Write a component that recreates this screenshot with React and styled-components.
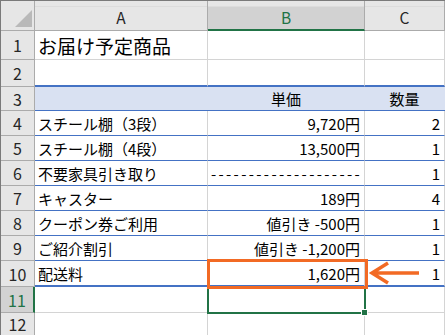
import React from "react";
import styled, { createGlobalStyle, css } from "styled-components";

const Global = createGlobalStyle`
  html, body { margin: 0; padding: 0; background: #fff; overflow: hidden; }
  body { font-family: "Noto Sans CJK JP", "Noto Sans", sans-serif; }
`;

const ORANGE = "#f26a24";
const GREEN = "#217346";
const BLUE = "#4472c4";
const GRID = "#d4d4d4";
const HEAD_BG = "#e6e6e6";
const HEAD_SEL = "#d2d2d2";
const HEAD_LINE = "#ababab";

const Frame = styled.div`
  position: relative;
  width: 444px;
  height: 334px;
  border-top: 1px solid #7a7a7a;
  border-left: 1px solid #7a7a7a;
  overflow: hidden;
  background: #fff;
`;

const Sheet = styled.div`
  display: grid;
  height: 100%;
  grid-template-columns: 34px 173px 157px 1fr;
  grid-template-rows: 30px 29px 27px 24px repeat(6, 25px) 26px 26px 1fr;
  font-family: "Noto Sans CJK JP", "Noto Sans", sans-serif;
  color: #000;
`;

const Corner = styled.div`
  box-sizing: border-box;
  background: ${HEAD_BG};
  border-right: 1px solid ${HEAD_LINE};
  border-bottom: 1px solid ${HEAD_LINE};
  display: flex;
  align-items: flex-end;
  justify-content: flex-end;
  padding: 0 2px 3px 0;
`;

const ColHead = styled.div`
  box-sizing: border-box;
  display: flex;
  align-items: center;
  justify-content: center;
  padding-top: 5px;
  font-size: 15.5px;
  line-height: 1;
  color: ${(p) => (p.$sel ? GREEN : "#262626")};
  background: linear-gradient(
    to bottom,
    ${HEAD_BG} 0 5px,
    #dcdcdc 5px 6px,
    ${(p) => (p.$sel ? HEAD_SEL : HEAD_BG)} 6px
  );
  border-right: 1px solid ${HEAD_LINE};
  border-bottom: ${(p) => (p.$sel ? `2px solid ${GREEN}` : `1px solid ${HEAD_LINE}`)};
`;

const RowHead = styled.div`
  box-sizing: border-box;
  display: flex;
  align-items: center;
  justify-content: center;
  font-size: 16px;
  line-height: 1;
  color: ${(p) => (p.$sel ? GREEN : "#262626")};
  background: ${(p) => (p.$sel ? HEAD_SEL : HEAD_BG)};
  border-right: ${(p) => (p.$sel ? `2px solid ${GREEN}` : `1px solid ${HEAD_LINE}`)};
  border-bottom: ${(p) => (p.$last ? "none" : `1px solid ${HEAD_LINE}`)};
`;

const lineStyles = {
  grid: `1px solid ${GRID}`,
  blue: `1px solid ${BLUE}`,
  blueThick: `2px solid ${BLUE}`,
  none: "none",
};

const Cell = styled.div`
  box-sizing: border-box;
  display: flex;
  align-items: center;
  min-width: 0;
  white-space: nowrap;
  font-size: 15px;
  line-height: 1;
  padding: 0 4px 0 3px;
  justify-content: ${(p) =>
    p.$align === "right" ? "flex-end" : p.$align === "center" ? "center" : "flex-start"};
  border-right: ${(p) => (p.$filled ? "none" : `1px solid ${GRID}`)};
  border-bottom: ${(p) => lineStyles[p.$line || "grid"]};
  background: ${(p) => (p.$filled ? "#d9e1f2" : "#fff")};
  ${(p) =>
    p.$title &&
    css`
      font-size: 19px;
      padding-top: 1px;
    `}
`;

const Dashes = styled.span`
  letter-spacing: 2.35px;
  margin-right: -2px;
`;

const OrangeBox = styled.div`
  position: absolute;
  left: 206px;
  top: 258px;
  width: 161px;
  height: 30px;
  box-sizing: border-box;
  border: 3px solid ${ORANGE};
`;

const SelectBox = styled.div`
  position: absolute;
  left: 206px;
  top: 286px;
  width: 159px;
  height: 27px;
  box-sizing: border-box;
  border: 2px solid ${GREEN};
`;

const FillHandle = styled.div`
  position: absolute;
  left: 361px;
  top: 309px;
  width: 5px;
  height: 5px;
  background: ${GREEN};
  outline: 1px solid #fff;
`;

const Arrow = styled.svg`
  position: absolute;
  left: 367px;
  top: 258px;
  overflow: visible;
`;

const rows = [
  { n: 1, a: "お届け予定商品", title: true },
  { n: 2, line: "blueThick" },
  { n: 3, b: "単価", c: "数量", head: true, line: "blue" },
  { n: 4, a: "スチール棚（3段）", b: "9,720円", c: "2", line: "blue" },
  { n: 5, a: "スチール棚（4段）", b: "13,500円", c: "1", line: "blue" },
  { n: 6, a: "不要家具引き取り", dash: true, c: "1", line: "blue" },
  { n: 7, a: "キャスター", b: "189円", c: "4", line: "blue" },
  { n: 8, a: "クーポン券ご利用", b: "値引き -500円", c: "1", line: "blue" },
  { n: 9, a: "ご紹介割引", b: "値引き -1,200円", c: "1", line: "blue" },
  { n: 10, a: "配送料", b: "1,620円", c: "1", line: "blueThick" },
  { n: 11, sel: true },
  { n: 12, line: "none", last: true },
];

export default function App() {
  return (
    <>
      <Global />
      <Frame>
        <Sheet>
          <Corner>
            <svg width="17" height="17" viewBox="0 0 17 17">
              <polygon points="17,0 17,17 0,17" fill="#b9b9b9" />
            </svg>
          </Corner>
          <ColHead>A</ColHead>
          <ColHead $sel>B</ColHead>
          <ColHead>C</ColHead>
          {rows.map((r) => (
            <React.Fragment key={r.n}>
              <RowHead $sel={r.sel} $last={r.last}>
                {r.n}
              </RowHead>
              <Cell $line={r.line} $filled={r.head} $title={r.title}>
                {r.a}
              </Cell>
              <Cell
                $line={r.line}
                $filled={r.head}
                $align={r.head || r.dash ? "center" : "right"}
              >
                {r.dash ? <Dashes>--------------------</Dashes> : r.b}
              </Cell>
              <Cell $line={r.line} $filled={r.head} $align={r.head ? "center" : "right"}>
                {r.c}
              </Cell>
            </React.Fragment>
          ))}
        </Sheet>
        <SelectBox />
        <FillHandle />
        <OrangeBox />
        <Arrow width="55" height="28" viewBox="0 0 55 28">
          <path
            d="M4 14 H51 M20 4 L4 14 L20 24"
            fill="none"
            stroke={ORANGE}
            strokeWidth="3.5"
          />
        </Arrow>
      </Frame>
    </>
  );
}
